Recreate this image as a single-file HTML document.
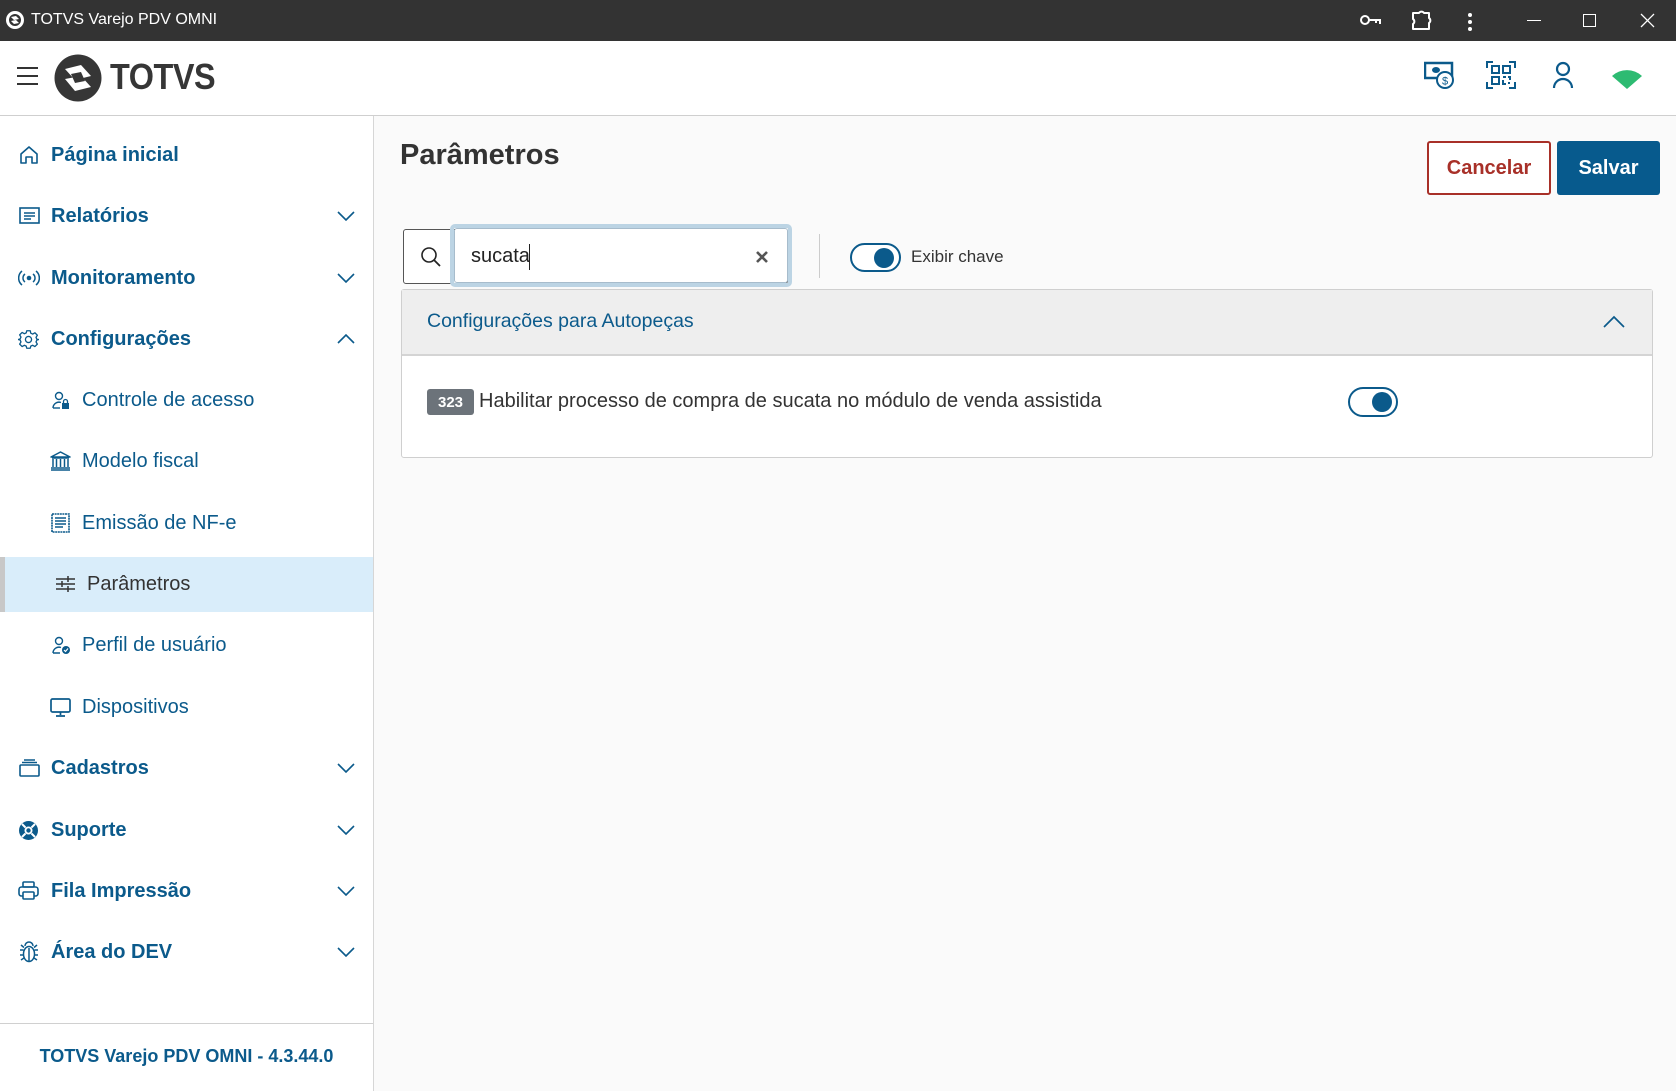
<!DOCTYPE html>
<html><head><meta charset="utf-8">
<style>
*{box-sizing:border-box;margin:0;padding:0}
body{width:1676px;height:1091px;overflow:hidden;background:#fafafa;font-family:"Liberation Sans",sans-serif;position:relative;color:#333}
.abs{position:absolute}
#tb{left:0;top:0;width:1676px;height:41px;background:#333;color:#fff}
#hd{left:0;top:41px;width:1676px;height:75px;background:#fff;border-bottom:1px solid #cfcfcf}
#sb{left:0;top:116px;width:374px;height:975px;background:#fff;border-right:1px solid #d6d6d6}
.mi{position:absolute;left:0;width:373px;height:40px;display:flex;align-items:center;color:#0b5a8b}
.mi.main span{font-weight:bold;font-size:20px;position:absolute;left:51px}
.mi.sub span{font-size:20px;position:absolute;left:82px}
.mi svg.ic{position:absolute}
.chev{position:absolute;left:337px}
</style></head><body>

<div id="tb" class="abs">
  <svg class="abs" style="left:5px;top:10px" width="20" height="20" viewBox="0 0 20 20"><circle cx="10" cy="10" r="9" fill="#fff"/><circle cx="10" cy="10" r="6" fill="#333"/><path d="M6 7 L11 6 L14 9 L9 10Z M6 11 L11 10 L14 13 L9 14Z" fill="#fff"/></svg>
  <div class="abs" style="left:31px;top:11px;font-size:16px;color:#fff">TOTVS Varejo PDV OMNI</div>
  <svg class="abs" style="left:1360px;top:13px" width="22" height="14" viewBox="0 0 22 14"><circle cx="5" cy="7" r="4" fill="none" stroke="#fff" stroke-width="2"/><path d="M9 7H20V11M16 7V10" stroke="#fff" stroke-width="2" fill="none"/></svg>
  <svg class="abs" style="left:1410px;top:9px" width="24" height="24" viewBox="0 0 24 24"><path d="M3 4H9A3 3 0 0 1 14 4H19V9A3 3 0 0 1 19 14V20H3V15A3 3 0 0 0 3 10Z" fill="none" stroke="#fff" stroke-width="2" stroke-linejoin="round"/></svg>
  <svg class="abs" style="left:1466px;top:12px" width="8" height="20"><circle cx="4" cy="3" r="2" fill="#fff"/><circle cx="4" cy="10" r="2" fill="#fff"/><circle cx="4" cy="17" r="2" fill="#fff"/></svg>
  <div class="abs" style="left:1527px;top:20px;width:14px;height:1px;background:#fff"></div>
  <div class="abs" style="left:1583px;top:14px;width:13px;height:13px;border:1px solid #fff"></div>
  <svg class="abs" style="left:1640px;top:13px" width="15" height="15"><path d="M1 1L14 14M14 1L1 14" stroke="#fff" stroke-width="1.3"/></svg>
</div>

<div id="hd" class="abs">
  <div class="abs" style="left:17px;top:26px;width:21px;height:2px;background:#333"></div>
  <div class="abs" style="left:17px;top:34px;width:21px;height:2px;background:#333"></div>
  <div class="abs" style="left:17px;top:42px;width:21px;height:2px;background:#333"></div>
  <svg class="abs" style="left:54px;top:13px" width="48" height="48" viewBox="0 0 48 48"><circle cx="24" cy="24" r="23.5" fill="#363636"/><path d="M11 15 L27 11 L37 22 L21 26Z" fill="#fff"/><path d="M11 25 L27 22 L37 33 L21 37Z" fill="#fff"/><path d="M17 20 L27 18 L31 27 L21 29Z" fill="#363636"/></svg>
  <div class="abs" style="left:110px;top:15px;font-size:36px;font-weight:bold;color:#363636;letter-spacing:-0.5px;transform:scaleX(0.9);transform-origin:left">TOTVS</div>
  <svg class="abs" style="left:1424px;top:20px" width="32" height="28" viewBox="0 0 32 28"><rect x="1" y="2" width="27" height="15" fill="none" stroke="#0b5a8b" stroke-width="2.5"/><ellipse cx="12" cy="9" rx="4" ry="3" fill="#0b5a8b"/><circle cx="21" cy="19" r="8" fill="#fff" stroke="#0b5a8b" stroke-width="2"/><text x="21" y="23.5" font-size="11" font-family="Liberation Sans" fill="#0b5a8b" text-anchor="middle">$</text></svg>
  <svg class="abs" style="left:1486px;top:20px" width="30" height="28" viewBox="0 0 30 28"><path d="M1 7V1H7M23 1H29V7M29 21V27H23M7 27H1V21" fill="none" stroke="#0b5a8b" stroke-width="2"/><rect x="6" y="5" width="7" height="7" fill="none" stroke="#0b5a8b" stroke-width="2"/><rect x="17" y="5" width="7" height="7" fill="none" stroke="#0b5a8b" stroke-width="2"/><rect x="6" y="16" width="7" height="7" fill="none" stroke="#0b5a8b" stroke-width="2"/><path d="M17 16H20M22 16H24V19M17 19V23H20M23 21V23" stroke="#0b5a8b" stroke-width="2" fill="none"/></svg>
  <svg class="abs" style="left:1552px;top:20px" width="22" height="28" viewBox="0 0 22 28"><circle cx="11" cy="8" r="6" fill="none" stroke="#0b5a8b" stroke-width="2.2"/><path d="M2 27A9 9 0 0 1 20 27" fill="none" stroke="#0b5a8b" stroke-width="2.2"/></svg>
  <svg class="abs" style="left:1611px;top:27px" width="32" height="22" viewBox="0 0 32 22"><path d="M1 8 A22 22 0 0 1 31 8 L16 21Z" fill="#2dbb72"/></svg>
</div>

<div id="sb" class="abs">
  <div class="mi main" style="top:19px"><svg class="ic" style="left:19px" width="20" height="20" viewBox="0 0 20 20"><path d="M2 9L10 2L18 9V18H13V12H7V18H2Z" fill="none" stroke="#0b5a8b" stroke-width="1.6" stroke-linejoin="round"/></svg><span>Página inicial</span></div>
  <div class="mi main" style="top:80px"><svg class="ic" style="left:19px" width="21" height="18" viewBox="0 0 21 18"><rect x="1" y="1" width="19" height="15" fill="none" stroke="#0b5a8b" stroke-width="1.6"/><path d="M5 6H16M5 9H16M5 12H12" stroke="#0b5a8b" stroke-width="1.5"/></svg><span>Relatórios</span><svg class="chev" width="18" height="10"><path d="M1 1L9 9L17 1" fill="none" stroke="#0b5a8b" stroke-width="1.6"/></svg></div>
  <div class="mi main" style="top:142px"><svg class="ic" style="left:18px" width="22" height="16" viewBox="0 0 22 16"><circle cx="11" cy="8" r="2.3" fill="#0b5a8b"/><path d="M7 4A5 5 0 0 0 7 12M15 4A5 5 0 0 1 15 12M4 1A9 9 0 0 0 4 15M18 1A9 9 0 0 1 18 15" fill="none" stroke="#0b5a8b" stroke-width="1.5"/></svg><span>Monitoramento</span><svg class="chev" width="18" height="10"><path d="M1 1L9 9L17 1" fill="none" stroke="#0b5a8b" stroke-width="1.6"/></svg></div>
  <div class="mi main" style="top:203px"><svg class="ic" style="left:18px" width="21" height="21" viewBox="0 0 24 24"><path d="M10 2h4l.6 2.8 2.2 1 2.5-1.5 2.8 2.8-1.5 2.5 1 2.2L24 12v0l-2.4.6-1 2.2 1.5 2.5-2.8 2.8-2.5-1.5-2.2 1L14 22h-4l-.6-2.4-2.2-1-2.5 1.5-2.8-2.8 1.5-2.5-1-2.2L0 12l2.4-.6 1-2.2L1.9 6.7l2.8-2.8 2.5 1.5 2.2-1Z" fill="none" stroke="#0b5a8b" stroke-width="1.5" stroke-linejoin="round"/><circle cx="12" cy="12" r="3.5" fill="none" stroke="#0b5a8b" stroke-width="1.5"/></svg><span>Configurações</span><svg class="chev" width="18" height="10"><path d="M1 9L9 1L17 9" fill="none" stroke="#0b5a8b" stroke-width="1.6"/></svg></div>
  <div class="mi sub" style="top:264px"><svg class="ic" style="left:52px" width="18" height="19" viewBox="0 0 18 19"><circle cx="7" cy="5" r="3.5" fill="none" stroke="#0b5a8b" stroke-width="1.4"/><path d="M1 17A6 6 0 0 1 9 11.5" fill="none" stroke="#0b5a8b" stroke-width="1.4"/><path d="M1 17H8" stroke="#0b5a8b" stroke-width="1.4"/><rect x="10" y="12" width="7" height="6" fill="#0b5a8b"/><path d="M11.5 12V10.5A2 2 0 0 1 15.5 10.5V12" fill="none" stroke="#0b5a8b" stroke-width="1.3"/></svg><span>Controle de acesso</span></div>
  <div class="mi sub" style="top:325px"><svg class="ic" style="left:50px" width="21" height="20" viewBox="0 0 21 20"><path d="M1 6L10.5 1L20 6Z" fill="none" stroke="#0b5a8b" stroke-width="1.5" stroke-linejoin="round"/><path d="M2 7H19M3 8V16M6.5 8V16M10.5 8V16M14.5 8V16M18 8V16M1 17H20M1 19H20" stroke="#0b5a8b" stroke-width="1.5"/></svg><span>Modelo fiscal</span></div>
  <div class="mi sub" style="top:387px"><svg class="ic" style="left:51px" width="19" height="20" viewBox="0 0 19 20"><rect x="1" y="1" width="17" height="18" fill="none" stroke="#0b5a8b" stroke-width="1.6" stroke-dasharray="2 0.6"/><path d="M4 5H15M4 8H15M4 11H15M4 14H12" stroke="#0b5a8b" stroke-width="1.4"/></svg><span>Emissão de NF-e</span></div>
  <div class="abs" style="left:0;top:441px;width:373px;height:55px;background:#d9edfa"></div>
  <div class="abs" style="left:0;top:441px;width:5px;height:55px;background:#c8c8c8"></div>
  <div class="mi sub" style="top:448px"><svg class="ic" style="left:56px" width="19" height="18" viewBox="0 0 19 18"><path d="M0 4H19M0 9H19M0 14H19M12 1V7M6 6V12M12 11V17" stroke="#333" stroke-width="1.5"/></svg><span style="left:87px;color:#333">Parâmetros</span></div>
  <div class="mi sub" style="top:509px"><svg class="ic" style="left:52px" width="19" height="19" viewBox="0 0 19 19"><circle cx="7" cy="5" r="3.5" fill="none" stroke="#0b5a8b" stroke-width="1.4"/><path d="M1 17A6 6 0 0 1 9 11.5M1 17H8" fill="none" stroke="#0b5a8b" stroke-width="1.4"/><circle cx="14" cy="14" r="4" fill="#0b5a8b"/><path d="M12 14L13.5 15.5L16 12.5" stroke="#fff" stroke-width="1.2" fill="none"/></svg><span>Perfil de usuário</span></div>
  <div class="mi sub" style="top:571px"><svg class="ic" style="left:50px" width="21" height="19" viewBox="0 0 21 19"><rect x="1" y="1" width="19" height="13" rx="1.5" fill="none" stroke="#0b5a8b" stroke-width="1.7"/><path d="M10.5 14V17M6 18H15" stroke="#0b5a8b" stroke-width="1.7"/></svg><span>Dispositivos</span></div>
  <div class="mi main" style="top:632px"><svg class="ic" style="left:19px" width="21" height="18" viewBox="0 0 21 18"><rect x="1" y="6" width="19" height="11" rx="1" fill="none" stroke="#0b5a8b" stroke-width="1.6"/><path d="M3 3.5H18M5 1H16" stroke="#0b5a8b" stroke-width="1.4"/></svg><span>Cadastros</span><svg class="chev" width="18" height="10"><path d="M1 1L9 9L17 1" fill="none" stroke="#0b5a8b" stroke-width="1.6"/></svg></div>
  <div class="mi main" style="top:694px"><svg class="ic" style="left:18px" width="21" height="21" viewBox="0 0 21 21"><circle cx="10.5" cy="10.5" r="9.5" fill="#0b5a8b"/><circle cx="10.5" cy="10.5" r="4" fill="#fff"/><circle cx="10.5" cy="10.5" r="2.2" fill="#0b5a8b"/><path d="M4 4L7.5 7.5M17 4L13.5 7.5M4 17L7.5 13.5M17 17L13.5 13.5" stroke="#fff" stroke-width="2"/></svg><span>Suporte</span><svg class="chev" width="18" height="10"><path d="M1 1L9 9L17 1" fill="none" stroke="#0b5a8b" stroke-width="1.6"/></svg></div>
  <div class="mi main" style="top:755px"><svg class="ic" style="left:18px" width="21" height="20" viewBox="0 0 21 20"><rect x="5" y="1" width="11" height="5" rx="1" fill="none" stroke="#0b5a8b" stroke-width="1.6"/><rect x="1" y="6" width="19" height="9" rx="2.5" fill="none" stroke="#0b5a8b" stroke-width="1.6"/><rect x="5" y="11" width="11" height="7" rx="1" fill="#fff" stroke="#0b5a8b" stroke-width="1.6"/></svg><span>Fila Impressão</span><svg class="chev" width="18" height="10"><path d="M1 1L9 9L17 1" fill="none" stroke="#0b5a8b" stroke-width="1.6"/></svg></div>
  <div class="mi main" style="top:816px"><svg class="ic" style="left:19px" width="20" height="22" viewBox="0 0 20 22"><ellipse cx="10" cy="13" rx="5.5" ry="7.5" fill="none" stroke="#0b5a8b" stroke-width="1.5"/><path d="M6 5A4 4 0 0 1 14 5M10 7V20M1 9H4.5M15.5 9H19M1 14H4.5M15.5 14H19M2 19L5 17M18 19L15 17M2 4L5 6.5M18 4L15 6.5" stroke="#0b5a8b" stroke-width="1.5" fill="none"/></svg><span>Área do DEV</span><svg class="chev" width="18" height="10"><path d="M1 1L9 9L17 1" fill="none" stroke="#0b5a8b" stroke-width="1.6"/></svg></div>
  <div class="abs" style="left:0;top:907px;width:373px;height:1px;background:#d0d0d0"></div>
  <div class="abs" style="left:0;top:930px;width:373px;text-align:center;font-size:18px;font-weight:bold;color:#0b5a8b">TOTVS Varejo PDV OMNI - 4.3.44.0</div>
</div>

<div class="abs" style="left:400px;top:139px;font-size:29px;font-weight:bold;color:#333">Parâmetros</div>
<div class="abs" style="left:1427px;top:141px;width:124px;height:54px;border:2px solid #a83028;border-radius:3px;background:#fff;color:#a83028;font-size:20px;font-weight:bold;display:flex;align-items:center;justify-content:center">Cancelar</div>
<div class="abs" style="left:1557px;top:141px;width:103px;height:54px;border-radius:3px;background:#075a8d;color:#fff;font-size:20px;font-weight:bold;display:flex;align-items:center;justify-content:center">Salvar</div>

<div class="abs" style="left:403px;top:229px;width:385px;height:55px;border:1px solid #555;border-radius:3px;background:#fff"></div>
<div class="abs" style="left:450px;top:224px;width:342px;height:63px;border:4px solid #bcd4e4;border-radius:5px"></div>
<div class="abs" style="left:454px;top:228px;width:334px;height:55px;border:1px solid #a7bccc;border-radius:3px;background:#fff"></div>
<svg class="abs" style="left:420px;top:246px" width="22" height="22" viewBox="0 0 22 22"><circle cx="9" cy="9" r="7" fill="none" stroke="#222" stroke-width="1.6"/><path d="M14 14L20 20" stroke="#222" stroke-width="1.8"/></svg>
<div class="abs" style="left:471px;top:245px;font-size:20px;color:#222">sucata</div>
<div class="abs" style="left:529px;top:244px;width:1px;height:26px;background:#222"></div>
<svg class="abs" style="left:755px;top:250px" width="14" height="14"><path d="M2 2L12 12M12 2L2 12" stroke="#555" stroke-width="2.6"/></svg>
<div class="abs" style="left:819px;top:234px;width:1px;height:44px;background:#ccc"></div>
<div class="abs" style="left:850px;top:243px;width:51px;height:29px;border:2.5px solid #0b5a8b;border-radius:15px;background:#fff"></div>
<div class="abs" style="left:874px;top:248px;width:20px;height:20px;border-radius:50%;background:#0b5a8b"></div>
<div class="abs" style="left:911px;top:247px;font-size:17px;color:#333">Exibir chave</div>

<div class="abs" style="left:401px;top:289px;width:1252px;height:169px;border:1px solid #cfcfcf;border-radius:3px;background:#fff"></div>
<div class="abs" style="left:402px;top:290px;width:1250px;height:66px;background:#eeeeee;border-bottom:2px solid #d4d4d4"></div>
<div class="abs" style="left:427px;top:310px;font-size:19.5px;color:#0b5a8b">Configurações para Autopeças</div>
<svg class="abs" style="left:1603px;top:315px" width="22" height="13"><path d="M1 12L11 2L21 12" fill="none" stroke="#0b5a8b" stroke-width="1.7"/></svg>
<div class="abs" style="left:427px;top:389px;width:47px;height:26px;background:#6c737a;border-radius:3px;color:#fff;font-size:15px;font-weight:bold;display:flex;align-items:center;justify-content:center">323</div>
<div class="abs" style="left:479px;top:390px;font-size:20px;color:#333">Habilitar processo de compra de sucata no módulo de venda assistida</div>
<div class="abs" style="left:1348px;top:387px;width:50px;height:30px;border:2.5px solid #0b5a8b;border-radius:15px;background:#fff"></div>
<div class="abs" style="left:1372px;top:392px;width:20px;height:20px;border-radius:50%;background:#0b5a8b"></div>
</body></html>
